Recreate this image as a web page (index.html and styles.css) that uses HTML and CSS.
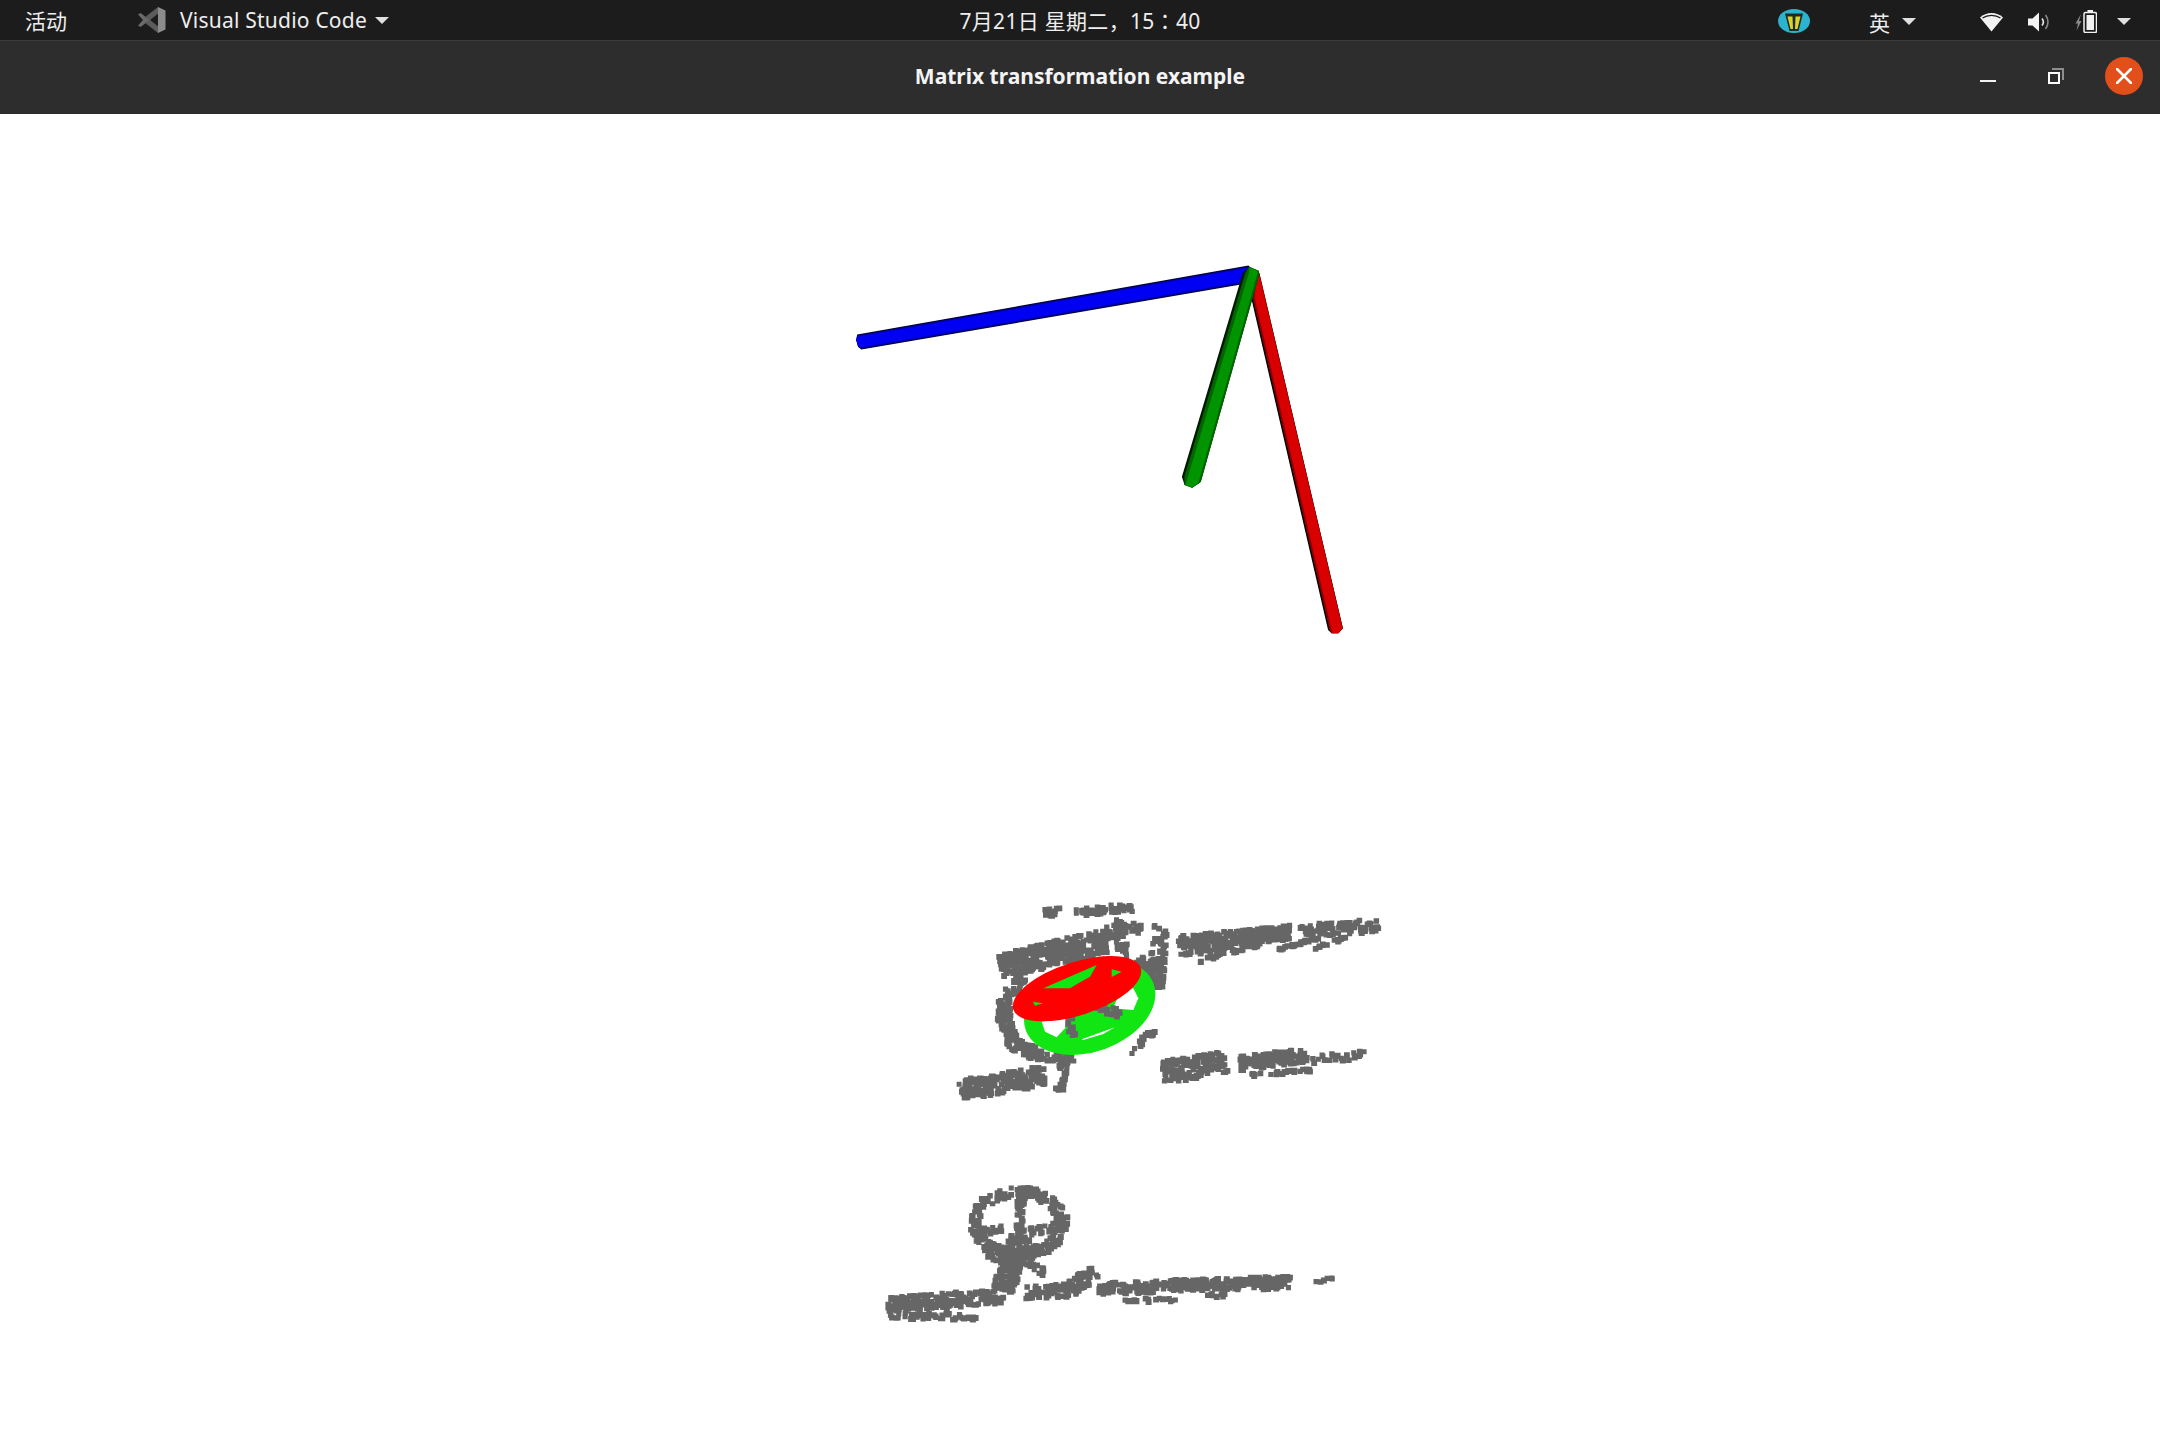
FILE: index.html
```html
<!DOCTYPE html>
<html lang="zh">
<head>
<meta charset="utf-8">
<title>Matrix transformation example</title>
<link rel="stylesheet" href="styles.css">
</head>
<body>
<header class="topbar">
  <div class="tb-left">
    <span class="activities">活动</span>
    <span class="app-menu">
      <svg class="vscode" width="30" height="30" viewBox="0 0 30 30">
        <path class="vs-dark" d="M1 9.500 3.600 8 9.500 12.500 14 15 9.500 17.500 3.600 22 1 20.500 6 15Z"/>
        <path class="vs-mid" d="M21 2 8.500 11.800 13 15 21 8.800ZM21 28 8.500 18.200 13 15 21 21.200Z"/>
        <path class="vs-light" d="M21 2 28.500 5.500V24.500L21 28Z"/>
      </svg>
      <span class="app-name">Visual Studio Code</span>
      <i class="caret"></i>
    </span>
  </div>
  <div class="clock" lang="ja">7月21日 星期二，15：40</div>
  <div class="tb-right">
    <svg class="tray-app" width="32" height="24" viewBox="0 0 32 24">
      <ellipse class="tray-teal" cx="16" cy="12" rx="16" ry="12"/>
      <path class="tray-dark" d="M7 4.500H25L20.500 22H11.500Z"/>
      <path class="tray-yellow" d="M9.500 7.500H14.500L15 20H12.500ZM17.500 7.500H22.500L19.500 20H17Z"/>
    </svg>
    <span class="ime"><span class="ime-label">英</span><i class="caret"></i></span>
    <span class="status">
      <svg width="23" height="20" viewBox="0 0 23 20"><path class="w" d="M0 5.500C6 -0.500 17 -0.500 23 5.500L11.500 19.500Z"/><path class="cut" d="M2.500 6C7.500 2.400 15.500 2.400 20.500 6"/></svg>
      <svg width="22" height="20" viewBox="0 0 22 20"><path class="w" d="M0 6.500H4.500L11 0.500V19.500L4.500 13.500H0Z"/><path class="arc" d="M14 6.500C15.600 8.500 15.600 11.500 14 13.500"/><path class="arc dim" d="M17.500 3C20.800 7 20.800 13 17.500 17"/></svg>
      <svg class="batt" width="22" height="23" viewBox="0 0 22 23"><path class="dim-fill" d="M6 4 0.500 13.500H3L1.500 20.500 6.500 11H4Z"/><rect class="batt-box" x="9" y="2.500" width="12.500" height="20" rx="1.500"/><rect class="w" x="12.500" y="0" width="5.500" height="2.500"/><rect class="w" x="11.500" y="5" width="7.500" height="15"/></svg>
      <i class="caret"></i>
    </span>
  </div>
</header>
<div class="titlebar">
  <span class="title">Matrix transformation example</span>
  <div class="win-buttons">
    <button class="win-btn" aria-label="minimize"><svg width="16" height="16" viewBox="0 0 16 16"><rect class="w" x="0" y="12" width="16" height="2"/></svg></button>
    <button class="win-btn" aria-label="restore"><svg width="16" height="16" viewBox="0 0 16 16"><path class="restore-back" d="M4 1H15V12"/><rect class="restore-front" x="1" y="5" width="10" height="10"/></svg></button>
    <button class="win-btn close" aria-label="close"><svg width="16" height="16" viewBox="0 0 16 16"><path class="close-x" d="M1 1 15 15M15 1 1 15"/></svg></button>
  </div>
</div>
<main class="viewport">
  <svg class="scene" width="2160" height="1326" viewBox="0 114 2160 1326">
    <polygon class="blue-0" points="857.200,334.500 856.200,340 858,346.700 861.300,349.500 1243.800,284 1252.400,270 1248.500,265.500"/>
    <polygon class="blue-1" points="857.200,335.500 856.200,340 858,346 861.300,348.500 1243.800,283 1252,271 1248.500,266.500"/>
    <polygon class="blue-2" points="857.200,337 856.200,340 858,345 861.300,347 1243.800,281.500 1250,271 1248.500,268"/>

    <polygon class="red-0" points="1251.300,298.300 1328.100,630 1331.600,633.300 1338.400,633.300 1342.900,628.300 1259.400,273.300 1252.400,272"/>
    <polygon class="red-1" points="1252.800,298.300 1329.600,630 1331.600,633.300 1338.400,633.300 1342.900,628.300 1259.400,273.300 1253.900,272"/>
    <polygon class="red-2" points="1254.800,298.300 1331.600,630 1332.600,633.300 1338.400,633.300 1342.400,628.300 1258.900,273.300 1255.900,272"/>

    <polygon class="green-0" points="1242.800,273 1249,266.700 1258.600,270.700 1259.400,274 1200.800,481.700 1199,483.300 1192.200,487.700 1184.600,485 1181.900,476.700"/>
    <polygon class="green-1" points="1245.300,273 1249,266.700 1258.600,270.700 1259.400,274 1200.800,481.700 1199,483.300 1192.200,487.700 1184.600,485 1184.400,476.700"/>
    <polygon class="green-2" points="1248.800,273 1249.500,267.500 1258,271 1257.400,274 1198.800,481.500 1198,483.300 1192.200,487.700 1185.600,485 1187.900,476.700"/>

    <path id="cloud" class="cloud"/>
    <ellipse class="wheel-green" cx="1089.700" cy="1007" rx="68" ry="44.600" transform="rotate(-20 1089.700 1007)"/>
    <polygon class="hole" points="1041.700,1021.700 1066.700,1016.700 1065,1028.300 1056.700,1037.300 1045,1031.700"/>
    <polygon class="hole" points="1112.700,1008.300 1121.700,990 1133.300,988.300 1138.300,998.300 1133.300,1010"/>
    <polygon class="hole" points="1081.700,1039.300 1115,1027.300 1103.300,1034 1083.300,1040"/>
    <path id="cloudTop" class="cloud"/>
    <ellipse class="wheel-red" cx="1077" cy="988.700" rx="67" ry="26.500" transform="rotate(-18 1077 988.700)"/>
    <polygon class="wheel-green" points="1043.300,988.300 1096.700,965 1090,976.700 1078.300,983.300 1070,988.300"/>
    <polygon class="wheel-green" points="1111.700,977 1121.700,971.700 1111.700,969.300"/>
    <polygon class="wheel-green" points="1033,1001.700 1043,1003.300 1035,1005.700"/>
  </svg>
</main>
<script src="points.js"></script>
</body>
</html>
```
FILE: styles.css
```css
* { box-sizing: border-box; }
html, body { margin: 0; height: 100%; background: #fff; overflow: hidden; }
body { font-family: "Noto Sans", "Noto Sans CJK SC", sans-serif; display: flex; flex-direction: column; }

.topbar {
  height: 41px; flex: none;
  background: #1c1c1c; border-bottom: 1px solid #3a3a3a;
  color: #eee; font-size: 21px;
  display: grid; grid-template-columns: 1fr auto 1fr; align-items: center;
}
.tb-left { display: flex; align-items: center; padding-left: 25px; }
.activities { font-family: "Noto Sans CJK SC", sans-serif; width: 112px; }
.app-menu { display: flex; align-items: center; }
.vscode { margin-right: 13px; }
.vs-dark { fill: #6a6a6a; }
.vs-mid { fill: #5c5c5c; }
.vs-light { fill: #8c8c8c; }
.app-name { letter-spacing: 0.22px; margin-right: 8px; }
.caret { display: block; width: 0; height: 0; border-left: 7px solid transparent; border-right: 7px solid transparent; border-top: 7.500px solid #e0e0e0; }
.clock { font-family: "Noto Sans", "Noto Sans CJK JP", sans-serif; letter-spacing: 0.3px; }
.tb-right { display: flex; align-items: center; justify-content: flex-end; padding: 3px 29px 0 0; }
.tray-app { margin-right: 59px; margin-top: -2px; }
.tray-teal { fill: #2cb4cf; }
.tray-dark { fill: #1d2c24; }
.tray-yellow { fill: #d9d32c; }
.ime { display: flex; align-items: center; margin-right: 64px; gap: 12px; }
.ime-label { font-family: "Noto Sans CJK SC", sans-serif; }
.status { display: flex; align-items: center; gap: 25px; }
.status .caret { margin-left: -5px; }
.w { fill: #f2f2f2; }
.cut { fill: none; stroke: #1c1c1c; stroke-width: 1.300; }
.arc { fill: none; stroke: #e8e8e8; stroke-width: 1.600; }
.arc.dim { stroke: #8a8a8a; }
.dim-fill { fill: #8a8a8a; }
.batt-box { fill: none; stroke: #f2f2f2; stroke-width: 1.500; }

.titlebar {
  height: 73px; flex: none; position: relative;
  background: #2d2d2d; color: #f4f4f4;
  display: flex; align-items: center; justify-content: center;
  padding-bottom: 4px;
}
.title { font-weight: 700; font-size: 21px; }
.win-buttons { position: absolute; right: 17px; top: 16px; display: flex; gap: 31px; align-items: center; }
.win-btn { width: 37px; height: 37px; padding: 0; border: 0; background: none; display: flex; align-items: center; justify-content: center; }
.win-btn.close { width: 38px; height: 38px; background: #e34f1a; border-radius: 50%; }
.restore-back { fill: none; stroke: #8d8d8d; stroke-width: 2; }
.restore-front { fill: none; stroke: #fff; stroke-width: 2; }
.close-x { fill: none; stroke: #fff; stroke-width: 2.500; stroke-linecap: round; }

.viewport { flex: 1; background: #fff; overflow: hidden; }
.scene { display: block; }
.blue-0 { fill: #000028; }
.blue-1 { fill: #0000b0; }
.blue-2 { fill: #0000f2; }
.red-0 { fill: #000; }
.red-1 { fill: #8c0000; }
.red-2 { fill: #d80000; }
.green-0 { fill: #001a00; }
.green-1 { fill: #006400; }
.green-2 { fill: #009400; }
.cloud { fill: #666; }
.wheel-green { fill: #12e612; }
.wheel-red { fill: #ff0000; }
.hole { fill: #fff; }
```
FILE: points.js
```js
// Seeded scatter of square points, standing in for the rendered point clouds.
var seed = 12345;
function rnd() { seed = (seed * 1664525 + 1013904223) % 4294967296; return seed / 4294967296; }

// [x1, y1, x2, y2, thickness, count]
var segments = [
  // upper cloud: top rail and posts
  [1045,913,1060,911,7,14],[1076,912,1137,907,8,48],
  [1120,917,1122,957,11,44],[1125,925,1142,930,9,18],
  [1161,925,1155,987,15,90],[1105,934,1118,930,14,24],
  // upper cloud: wide bar
  [1000,966,1105,941,24,330],
  // ring around the wheel
  [1022,975,1005,1000,12,44],[1005,1000,1004,1022,14,44],[1004,1022,1014,1044,14,48],[1014,1044,1040,1056,13,52],[1040,1056,1075,1058,9,36],
  [1017,972,1040,962,7,22],[1135,960,1158,985,15,50],[1155,1030,1130,1052,7,16],
  // post and lower-left bar
  [1064,1056,1059,1092,9,32],[960,1090,1046,1075,20,210],
  // upper right rails
  [1178,943,1290,932,14,270],[1300,931,1378,925,13,90],
  [1180,955,1230,947,3,26],[1197,961,1270,941,4,34],[1277,950,1327,935,3,28],[1313,948,1347,937,3,16],
  // lower right rails
  [1162,1072,1226,1062,22,150],[1240,1063,1307,1055,14,120],[1312,1060,1366,1054,9,22],[1248,1075,1310,1070,3,26],

  // lower cloud: spokes and post
  [1020,1237,1021,1198,9,34],[983,1231,1003,1230,9,18],[1030,1232,1058,1226,8,24],
  [1020,1237,1003,1290,22,170],[985,1248,1013,1263,13,34],[1042,1248,1017,1260,12,34],
  [1025,1266,1045,1272,9,14],
  // ground
  [887,1305,997,1296,15,190],[885,1315,977,1317,6,44],[985,1300,1005,1300,8,14],
  [1025,1293,1070,1290,13,54],[1070,1290,1094,1271,15,56],
  [1097,1288,1290,1282,12,300],[1123,1300,1180,1300,4,18],[1205,1294,1225,1296,4,10],
  [1303,1283,1332,1278,4,6]
];
// [cx, cy, rx, ry, thickness, count]
var rings = [[1018,1223,44,31,11,240]];
// Drawn over the green wheel.
var topSegments = [[1068,1012,1072,1035,7,18],[1098,1006,1120,1014,9,22]];

function square(x, y) {
  var s = 5 + rnd();
  return "M" + x.toFixed(1) + " " + y.toFixed(1) + "h" + s.toFixed(1) + "v" + s.toFixed(1) + "h-" + s.toFixed(1) + "z";
}
function build(list) {
  var d = "";
  list.forEach(function (g) {
    var dx = g[2] - g[0], dy = g[3] - g[1], len = Math.sqrt(dx * dx + dy * dy);
    var nx = -dy / len, ny = dx / len;
    for (var i = 0; i < g[5]; i++) {
      var t = rnd(), o = (rnd() - 0.5) * g[4];
      d += square(g[0] + dx * t + nx * o - 2.5, g[1] + dy * t + ny * o - 2.5);
    }
  });
  return d;
}
function buildRings(list) {
  var d = "";
  list.forEach(function (r) {
    for (var i = 0; i < r[5]; i++) {
      var a = rnd() * Math.PI * 2, o = (rnd() - 0.5) * r[4];
      d += square(r[0] + (r[2] + o) * Math.cos(a) - 2.5, r[1] + (r[3] + o) * Math.sin(a) - 2.5);
    }
  });
  return d;
}
document.getElementById("cloud").setAttribute("d", build(segments) + buildRings(rings));
document.getElementById("cloudTop").setAttribute("d", build(topSegments));
```
